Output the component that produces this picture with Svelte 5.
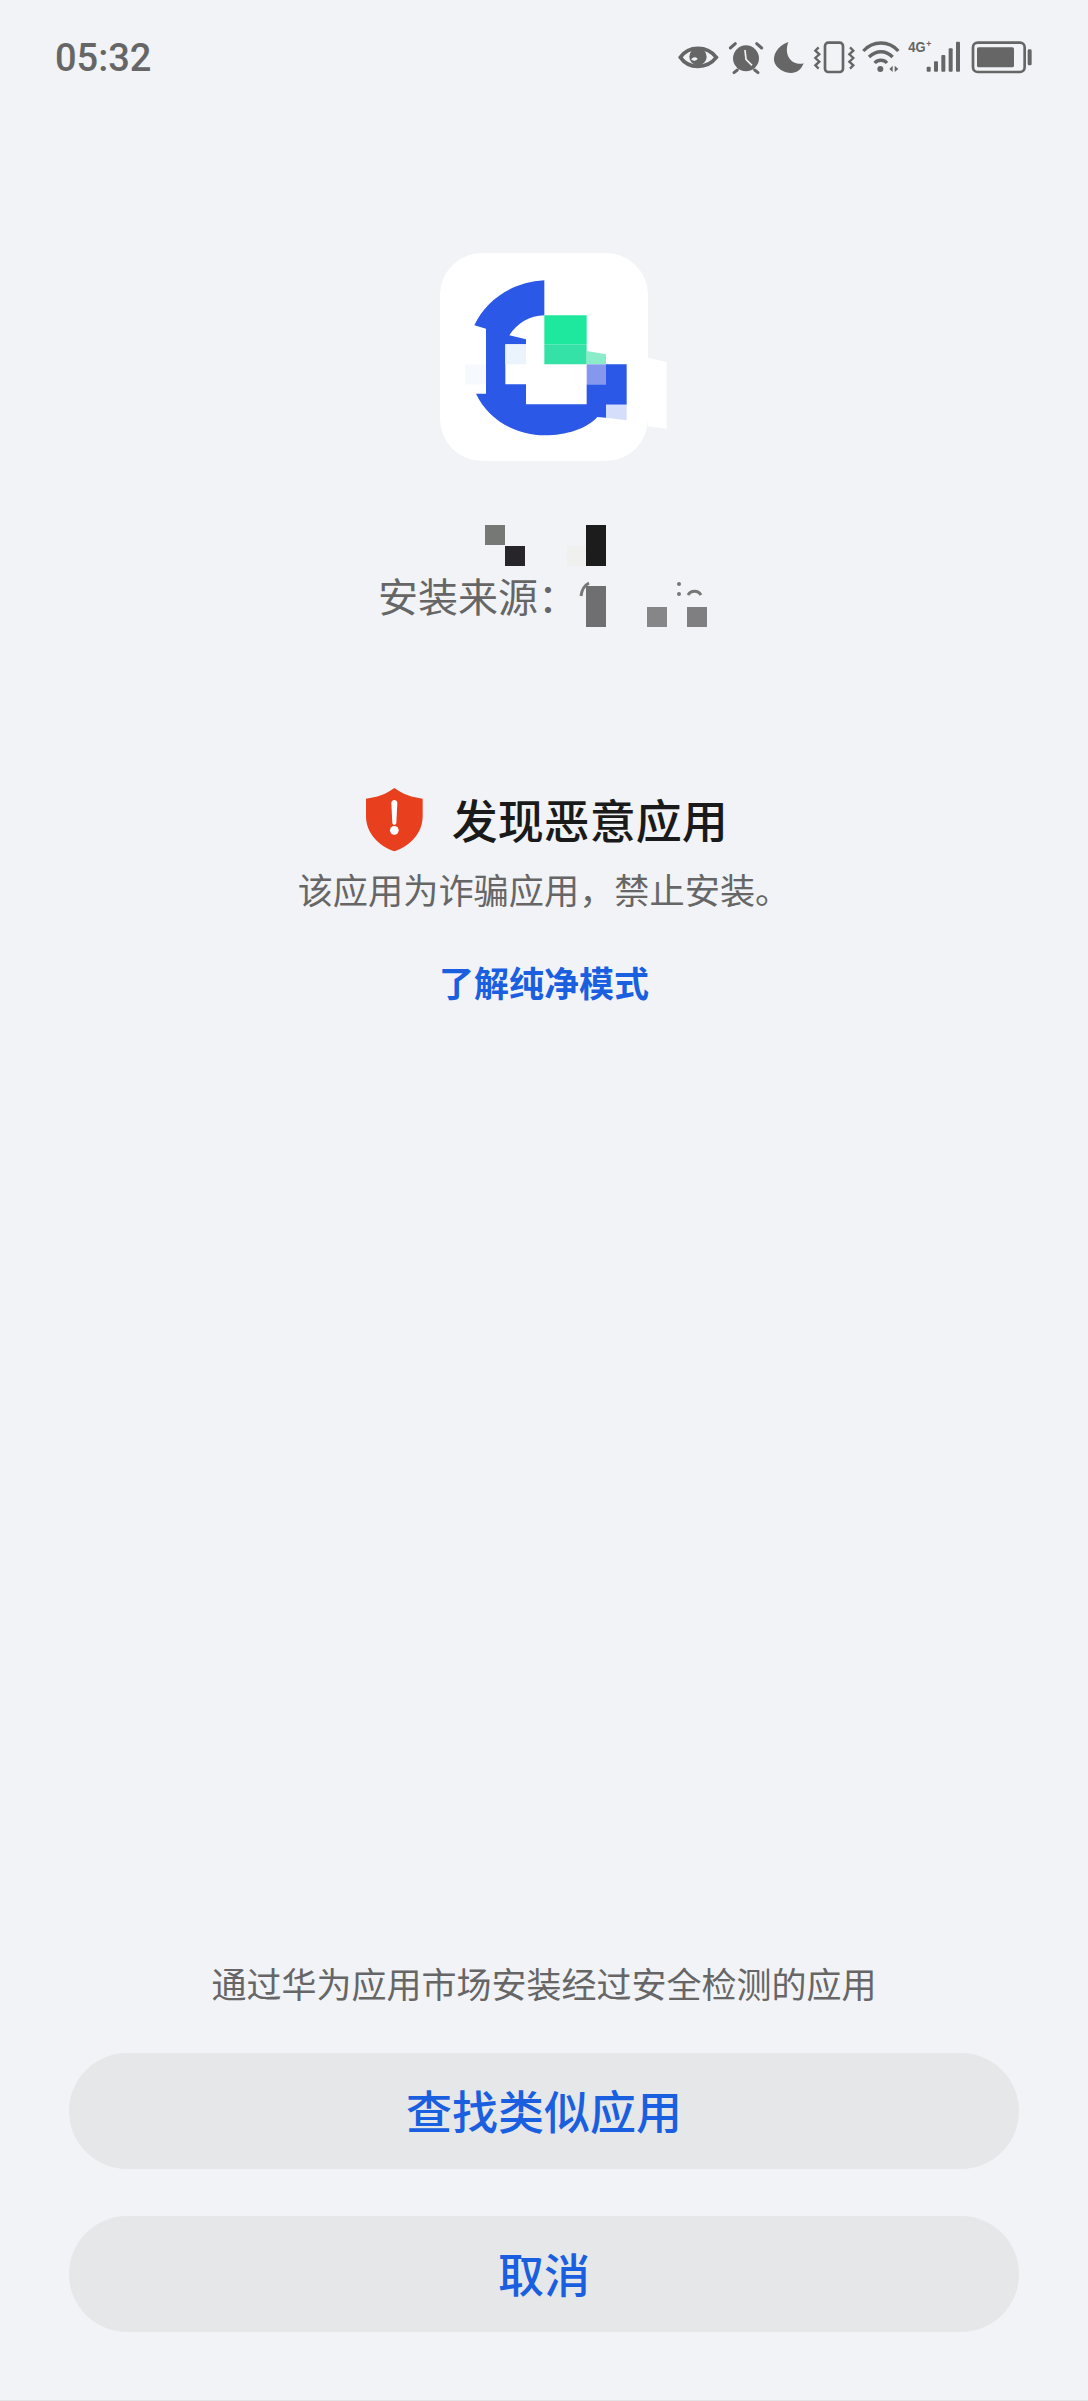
<script lang="ts">
  const blue = '#2b58e6';
  const tip = '通过华为应用市场安装经过安全检测的应用';
</script>

<div class="page">
  <header class="status">
    <span class="time">05:32</span>
    <div class="status-icons">
      <svg width="48.33" height="70" viewBox="50 0 145 210">
        <path d="M60 112C85 76 140 76 168 112C140 148 85 148 60 112Z" fill="none" stroke="#666" stroke-width="11" />
        <circle cx="113" cy="110" r="26" fill="#666" />
        <path d="M92 118c8-8 12-8 20-2-6 8-14 8-20 2z" fill="#f1f3f6" />
      </svg>
      <svg width="45" height="70" viewBox="195 0 135 210">
        <circle cx="258" cy="115" r="39" fill="#666" />
        <path d="M255 90L258 118L276 136" fill="none" stroke="#f1f3f6" stroke-width="5" />
        <path d="M211 84L226 71M305 84L290 71M232 150L222 158M284 150L294 158" stroke="#666" stroke-width="9" stroke-linecap="round" />
      </svg>
      <svg width="40" height="70" viewBox="330 0 120 210">
        <path d="M385 66C350 78 338 108 343 126C350 150 385 164 405 157C418 154 426 143 431 130C405 138 368 115 385 66Z" fill="#666" />
      </svg>
      <svg width="48.33" height="70" viewBox="450 0 145 210">
        <rect x="495" y="68" width="54" height="88" rx="10" fill="none" stroke="#666" stroke-width="8" />
        <path d="M476 82L466 92L478 103L466 114L478 125L466 136L476 146M570 82L580 92L568 103L580 114L568 125L580 136L570 146" fill="none" stroke="#666" stroke-width="7" />
      </svg>
      <svg width="46.67" height="70" viewBox="595 0 140 210">
        <g fill="none" stroke="#666" stroke-width="10">
          <path d="M611 93C640 61 688 61 716 93" />
          <path d="M628 111C650 90 678 90 699 111" />
          <path d="M645 129C655 118 672 118 682 129" />
        </g>
        <circle cx="662" cy="147" r="9" fill="#666" />
        <path d="M689 147L699 137V156ZM705 137V156L716 147Z" fill="#666" />
      </svg>
      <svg width="63.33" height="70" viewBox="735 0 190 210">
        <text class="net" x="745" y="97" textLength="52" lengthAdjust="spacingAndGlyphs">4G</text>
        <text class="net-plus" x="799" y="80">+</text>
        <g fill="#666">
          <rect x="800" y="140" width="12" height="15" rx="3" />
          <rect x="822" y="124" width="12" height="31" rx="3" />
          <rect x="844" y="105" width="12" height="50" rx="3" />
          <rect x="866" y="85" width="12" height="70" rx="3" />
          <rect x="888" y="65" width="12" height="90" rx="3" />
        </g>
      </svg>
      <svg width="66.67" height="70" viewBox="925 0 200 210">
        <rect x="940" y="68" width="155" height="88" rx="14" fill="none" stroke="#666" stroke-width="8" />
        <rect x="952" y="82" width="111" height="60" rx="5" fill="#666" />
        <rect x="1104" y="88" width="12" height="48" rx="4" fill="#666" />
      </svg>
    </div>
  </header>

  <main class="main">
    <div class="app-icon">
      <svg class="logo" width="208" height="208" viewBox="420 98 624 624">
        <path d="M1044 412L1100 425V625L1044 618Z" fill="#fff" />
        <path d="M495 432H556V492H495Z" fill="#f6f9fd" />
        <path d="M733 180C640 185 560 235 523 315L558 325V520L528 520C565 600 650 645 733 645C800 645 860 625 892 590L918 592V553H980V432H918V492H860V552H678V492H616V372H678V357L628 345C650 310 690 285 733 285Z" fill={blue} />
        <path d="M616 372H678V432H616Z" fill="#ebf4fd" />
        <path d="M733 285H860V372H733Z" fill="#1ee89e" />
        <path d="M733 372H860V432H733Z" fill="#34e2a8" />
        <path d="M860 392L918 402V432H860Z" fill="#8aecc8" />
        <path d="M860 432H918V492H860Z" fill="#8598ee" />
        <path d="M918 553H980V600L918 592Z" fill="#d5dffc" />
      </svg>
    </div>

    <div class="app-name">
      <i class="block" style="left:485px;top:0;width:20px;height:20px;background:#767876"></i>
      <i class="block" style="left:505px;top:21px;width:20px;height:20px;background:#27252a"></i>
      <i class="block" style="left:567px;top:21px;width:19px;height:20px;background:#f0f0ef"></i>
      <i class="block" style="left:586px;top:0;width:20px;height:41px;background:#1c1c1c"></i>
    </div>

    <div class="source">
      <span>安装来源：</span>
      <span class="source-value">
        <svg class="scraps" width="131" height="60" viewBox="0 0 131 60">
          <path d="M5 22C6 14 9 11 13 9" fill="none" stroke="#777" stroke-width="3" />
          <circle cx="103" cy="10" r="2" fill="#777" />
          <circle cx="103" cy="20" r="2" fill="#777" />
          <path d="M112 21C115 16 122 16 125 21" fill="none" stroke="#777" stroke-width="3" />
          <rect x="10" y="12" width="20" height="41" fill="#6f6f72" />
          <rect x="71" y="33" width="20" height="20" fill="#868688" />
          <rect x="111" y="33" width="20" height="20" fill="#7f7f81" />
        </svg>
      </span>
    </div>

    <div class="title-row">
      <svg width="56.67" height="63.33" viewBox="257 55 170 190">
        <path d="M342 55C370 75 395 83 427 87V140C427 190 390 230 342 245C295 230 257 190 257 140V87C290 83 315 75 342 55Z" fill="#e8401f" />
        <path d="M333 100C333 88 351 88 351 100L348 160C347 167 337 167 336 160Z" fill="#fff" />
        <circle cx="342" cy="182" r="13" fill="#fff" />
      </svg>
      <h1>发现恶意应用</h1>
    </div>
    <p class="desc">该应用为诈骗应用，禁止安装。</p>
    <a class="learn" href="#learn">了解纯净模式</a>
  </main>

  <footer class="footer">
    <p class="tip">{tip}</p>
    <button class="btn">查找类似应用</button>
    <button class="btn">取消</button>
  </footer>
</div>

<style>
  :global(body) {
    margin: 0;
    background: #f1f3f6;
  }

  .page {
    display: flex;
    flex-direction: column;
    box-sizing: border-box;
    height: 2401px;
    border-bottom: 1px solid #e2e3e5;
    background: #f1f3f6;
    font-family: 'Noto Sans CJK SC', 'Noto Sans', sans-serif;
  }

  .status {
    display: flex;
    align-items: center;
    justify-content: space-between;
    height: 70px;
    margin-top: 20px;
    padding: 0 53px 0 55px;
  }

  .time {
    padding-top: 6px;
    font-family: Roboto, sans-serif;
    font-size: 38px;
    font-weight: 500;
    color: #666;
  }

  .status-icons {
    display: flex;
  }

  .status-icons svg {
    display: block;
  }

  .net,
  .net-plus {
    font-family: 'Liberation Sans', sans-serif;
    font-weight: 700;
    fill: #666;
  }

  .net {
    font-size: 44px;
  }

  .net-plus {
    font-size: 26px;
  }

  .main {
    display: flex;
    flex-direction: column;
    align-items: center;
    position: relative;
  }

  .app-icon {
    width: 208px;
    height: 208px;
    margin-top: 163px;
    border-radius: 42px;
    background: #fff;
  }

  .logo {
    display: block;
    overflow: visible;
  }

  .app-name {
    position: relative;
    align-self: stretch;
    height: 47px;
    margin-top: 64px;
  }

  .block {
    position: absolute;
    display: block;
  }

  .source {
    display: flex;
    height: 46px;
    font-size: 40px;
    line-height: 46px;
    color: #666;
  }

  .source-value {
    position: relative;
    width: 132px;
  }

  .scraps {
    position: absolute;
    left: -2px;
    top: 2px;
  }

  .title-row {
    display: flex;
    align-items: center;
    gap: 29px;
    height: 64px;
    margin-top: 170px;
    padding-left: 6px;
  }

  h1 {
    margin: 0;
    padding-bottom: 3px;
    font-size: 46px;
    font-weight: 500;
    line-height: 61px;
    color: #1a1a1a;
  }

  .desc {
    margin: 14px 0 0;
    font-size: 35.2px;
    line-height: 46px;
    color: #666;
  }

  .learn {
    margin-top: 47px;
    font-size: 35px;
    font-weight: 700;
    line-height: 46px;
    color: #1a5fdf;
    text-decoration: none;
  }

  .footer {
    display: flex;
    flex-direction: column;
    gap: 47px;
    margin-top: auto;
    padding: 0 69px 68px;
  }

  .tip {
    margin: 0;
    font-size: 35px;
    line-height: 46px;
    text-align: center;
    color: #666;
  }

  .btn {
    box-sizing: border-box;
    height: 116px;
    padding: 0 0 4px;
    border: 0;
    border-radius: 58px;
    background: #e6e7e9;
    font-family: inherit;
    font-size: 46px;
    font-weight: 500;
    color: #1a5fdf;
  }
</style>
